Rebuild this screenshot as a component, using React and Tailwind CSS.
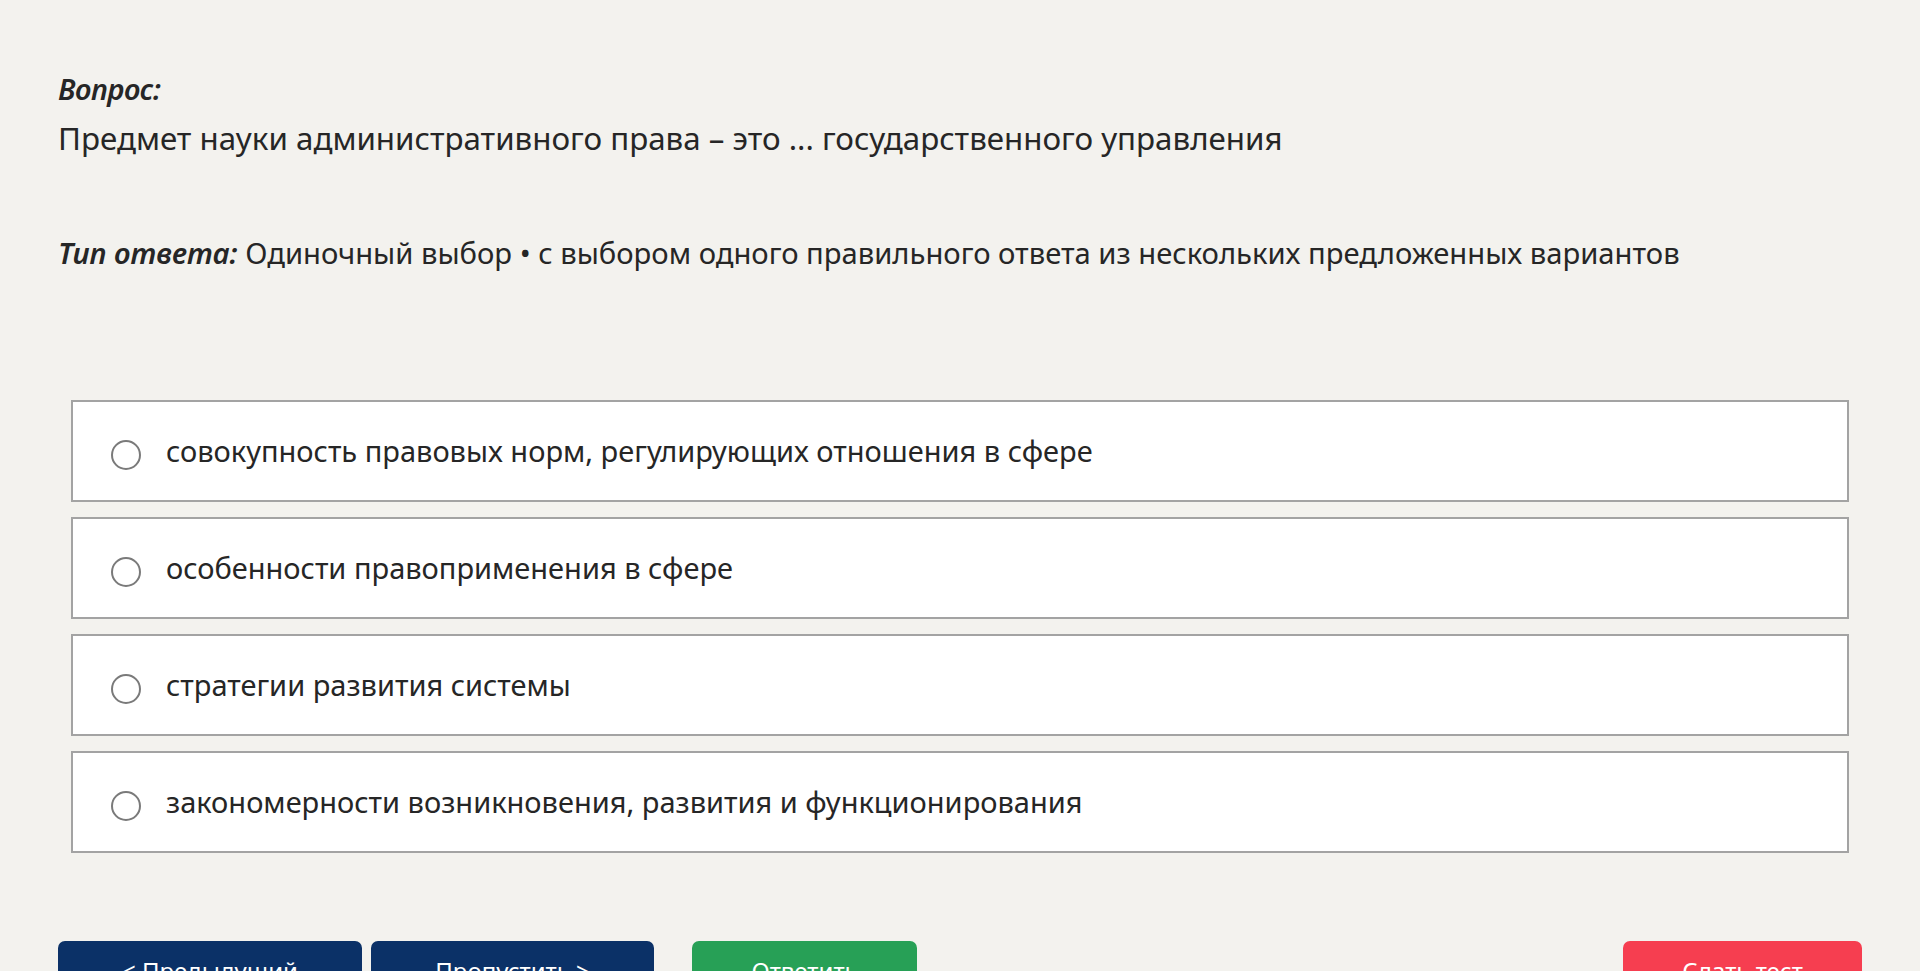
export default function App() {
  const options = [
    "совокупность правовых норм, регулирующих отношения в сфере",
    "особенности правоприменения в сфере",
    "стратегии развития системы",
    "закономерности возникновения, развития и функционирования",
  ];
  return (
    <div
      className="min-h-screen bg-[#f3f2ee] px-[58px] pt-[71px] text-[#262626]"
      style={{ fontFamily: '"Noto Sans", "Open Sans", sans-serif' }}
    >
      <div className="text-[29px] italic font-semibold leading-[36px] tracking-[-0.5px]">Вопрос:</div>
      <div className="mt-[11px] text-[31.3px] leading-[40px]">
        Предмет науки административного права – это ... государственного управления
      </div>
      <div className="mt-[75px] text-[29.2px] leading-[40px]">
        <span className="italic font-semibold">Тип ответа:</span> Одиночный выбор • с выбором одного правильного ответа из нескольких предложенных вариантов
      </div>
      <div className="mt-[127px] mx-[13px] flex flex-col gap-[15px]">
        {options.map((o) => (
          <label
            key={o}
            className="flex h-[102px] items-center border-2 border-[#a3a3a3] bg-white pl-[38px]"
          >
            <span className="mt-[8px] h-[30px] w-[30px] shrink-0 rounded-full border-2 border-[#7a7a7a] bg-white" />
            <span className="ml-[25px] text-[29px] leading-[40px]">{o}</span>
          </label>
        ))}
      </div>
      <div className="mt-[88px] flex items-start">
        <button className="h-[60px] w-[304px] rounded-[7px] bg-[#0b3167] text-[24px] text-white">
          {"< Предыдущий"}
        </button>
        <button className="ml-[9px] h-[60px] w-[283px] rounded-[7px] bg-[#0b3167] text-[24px] text-white">
          {"Пропустить >"}
        </button>
        <button className="ml-[38px] h-[60px] w-[225px] rounded-[7px] bg-[#27a056] text-[24px] text-white">
          Ответить
        </button>
        <div className="flex-1" />
        <button className="h-[60px] w-[239px] rounded-[7px] bg-[#f63e50] text-[24px] text-white">
          Сдать тест
        </button>
      </div>
    </div>
  );
}
